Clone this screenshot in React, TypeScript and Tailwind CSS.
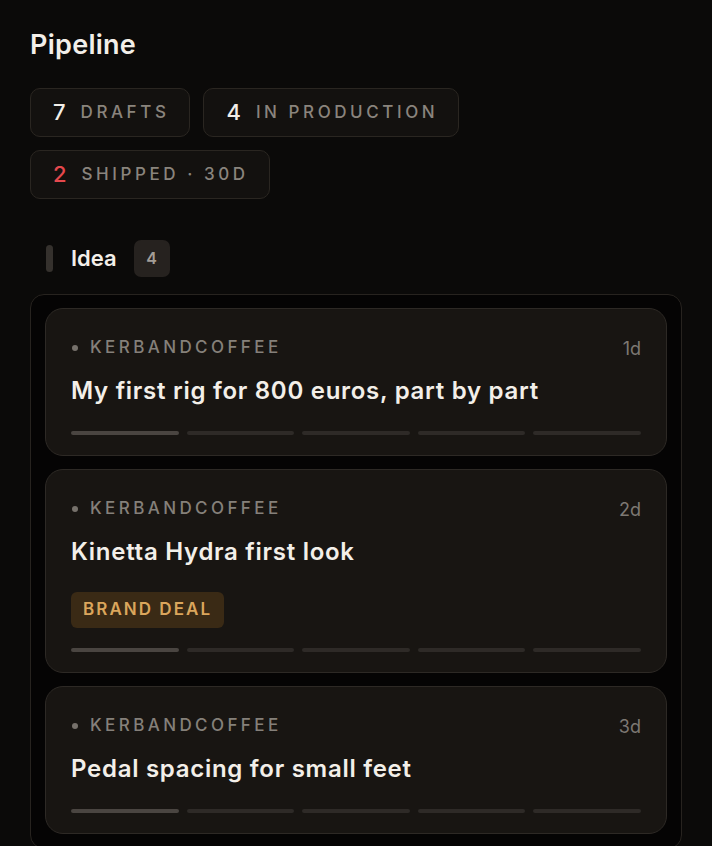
import React from 'react';

type Stat = { value: number; label: string; accent?: boolean };

type Card = {
    channel: string;
    title: string;
    age: string;
    tag?: string;
    progress: number;
};

const stats: Stat[] = [
    { value: 7, label: 'Drafts' },
    { value: 4, label: 'In production' },
    { value: 2, label: 'Shipped · 30d', accent: true },
];

const cards: Card[] = [
    { channel: 'kerbandcoffee', title: 'My first rig for 800 euros, part by part', age: '1d', progress: 1 },
    { channel: 'kerbandcoffee', title: 'Kinetta Hydra first look', age: '2d', tag: 'Brand deal', progress: 1 },
    { channel: 'kerbandcoffee', title: 'Pedal spacing for small feet', age: '3d', progress: 1 },
];

const StatChip: React.FC<{ stat: Stat }> = ({ stat }) => (
    <div className="h-[49px] pl-[22px] pr-[20px] flex items-center gap-[15px] rounded-[10px] border border-[#2a2621] bg-[#13110f]">
        <span className={`text-[22px] font-medium ${stat.accent ? 'text-[#e5484d]' : 'text-[#f2eee8]'}`}>{stat.value}</span>
        <span className="text-[17px] font-medium uppercase tracking-[0.21em] text-[#8a847d]">{stat.label}</span>
    </div>
);

const PipelineCard: React.FC<{ card: Card }> = ({ card }) => (
    <div className="rounded-[18px] border border-[#2d2925] bg-[#181512] px-[25px] pt-[29px] pb-[20px] flex flex-col">
        <div className="flex items-center justify-between h-[20px]">
            <div className="flex items-center gap-[12px] pl-[1px]">
                <span className="w-[6px] h-[6px] rounded-full bg-[#76716b]" />
                <span className="text-[17px] font-medium uppercase tracking-[0.2em] text-[#85807a]">{card.channel}</span>
            </div>
            <span className="text-[18px] text-[#7d7872]">{card.age}</span>
        </div>
        <h3 className="mt-[19px] text-[24px] leading-[28px] font-semibold tracking-[0.03em] text-[#f3efe9]">{card.title}</h3>
        {card.tag && (
            <div className="mt-[26px] self-start h-[36px] px-[12px] flex items-center rounded-[6px] bg-[#3a2a15]">
                <span className="text-[17px] font-semibold uppercase tracking-[0.12em] text-[#dba65c]">{card.tag}</span>
            </div>
        )}
        <div className={`${card.tag ? 'mt-[20px]' : 'mt-[26px]'} grid grid-cols-5 gap-[8px]`}>
            {[0, 1, 2, 3, 4].map(i => (
                <div key={i} className={`h-[4px] rounded-full ${i < card.progress ? 'bg-[#4a4541]' : 'bg-[#2e2a27]'}`} />
            ))}
        </div>
    </div>
);

export default function App() {
    return (
        <div className="min-h-[846px] bg-[#0b0a09] px-[30px] pt-[28px] pb-10" style={{ fontFamily: 'Inter, "Noto Sans", sans-serif' }}>
            <h1 className="text-[27px] leading-[34px] font-semibold tracking-[0.01em] text-[#f3efe9]">Pipeline</h1>

            <div className="mt-[26px] flex flex-wrap gap-[13px] max-w-[470px]">
                {stats.map(s => (
                    <StatChip key={s.label} stat={s} />
                ))}
            </div>

            <div className="mt-[40px] flex items-center pl-[16px] h-[38px]">
                <span className="w-[7px] h-[27px] rounded-full bg-[#35312d]" />
                <span className="ml-[18px] text-[22px] font-semibold text-[#f3efe9]">Idea</span>
                <span className="ml-[17px] w-[36px] h-[37px] rounded-[7px] bg-[#26221f] flex items-center justify-center text-[16px] font-semibold text-[#a39d96]">4</span>
            </div>

            <div className="mt-[17px] rounded-[14px] border border-[#27231f] bg-[#050404] px-[14px] pt-[13px] pb-[14px] flex flex-col gap-[13px]">
                {cards.map(c => (
                    <PipelineCard key={c.title} card={c} />
                ))}
            </div>
        </div>
    );
}
